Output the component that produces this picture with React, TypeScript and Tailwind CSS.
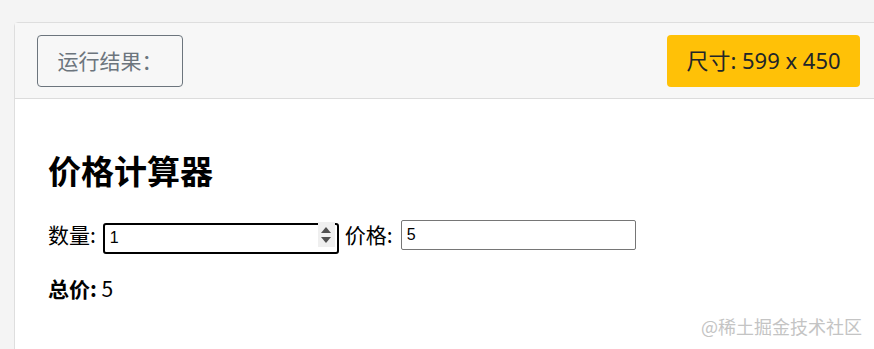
import { useState } from "react";

export default function App() {
  const [qty, setQty] = useState(1);
  const [price, setPrice] = useState(5);

  return (
    <div className="relative h-[349px] w-[874px] overflow-hidden bg-[#f4f4f4] pt-[22px] pl-[14px] font-['Noto_Sans_CJK_SC',sans-serif]">
      <div className="w-[880px] h-[340px] rounded-tl-[4px] border border-[#dedede] bg-white">
        {/* cabecera */}
        <div className="flex h-[76px] items-center justify-between border-b border-[#dcdcdc] bg-[#f7f7f7] pl-[22px] pr-[33px]">
          <button
            type="button"
            className="h-[52px] w-[146px] rounded-[4px] border border-[#6c757d] text-[21px] text-[#6c757d]"
          >
            运行结果：
          </button>
          <div className="flex h-[52px] w-[193px] items-center justify-center rounded-[4px] bg-[#ffc107] text-[22px] text-[#212529] font-['Noto_Sans','Noto_Sans_CJK_SC',sans-serif]">
            尺寸: 599 x 450
          </div>
        </div>

        {/* cuerpo */}
        <div className="pl-[33px] pt-[50px]">
          <h1 className="text-[33px] font-bold leading-[42px] text-black">价格计算器</h1>
          <div className="mt-[28px] flex items-center text-[21px] text-black">
            <span>数量:</span>
            <div className="relative ml-[7px] h-[31px] w-[236px]">
              <input
                type="text"
                value={qty}
                onChange={(e) => setQty(Number(e.target.value) || 0)}
                className="h-full w-full rounded-[3px] border-2 border-black bg-white px-[5px] text-[16px] font-['Liberation_Sans',sans-serif] outline-none"
              />
              {/* flechas del campo numérico */}
              <div className="absolute right-[4px] top-[3px] flex h-[25px] w-[17px] flex-col items-center justify-center gap-[4px] bg-[#efefef]">
                <svg width="10" height="6" viewBox="0 0 10 6">
                  <path d="M5 0L10 6H0z" fill="#505050" />
                </svg>
                <svg width="10" height="6" viewBox="0 0 10 6">
                  <path d="M0 0h10L5 6z" fill="#505050" />
                </svg>
              </div>
            </div>
            <span className="ml-[6px]">价格:</span>
            <input
              type="text"
              value={price}
              onChange={(e) => setPrice(Number(e.target.value) || 0)}
              className="ml-[8px] h-[30px] w-[235px] rounded-[2px] border border-[#767676] bg-white px-[5px] text-[16px] font-['Liberation_Sans',sans-serif] outline-none"
            />
          </div>
          <p className="mt-[22px] text-[21px] text-black">
            <b>总价:</b> {qty * price}
          </p>
        </div>
      </div>

      {/* marca de agua */}
      <span className="absolute right-[12px] bottom-[9px] text-[18px] text-[#c4c4c4]">@稀土掘金技术社区</span>
    </div>
  );
}
